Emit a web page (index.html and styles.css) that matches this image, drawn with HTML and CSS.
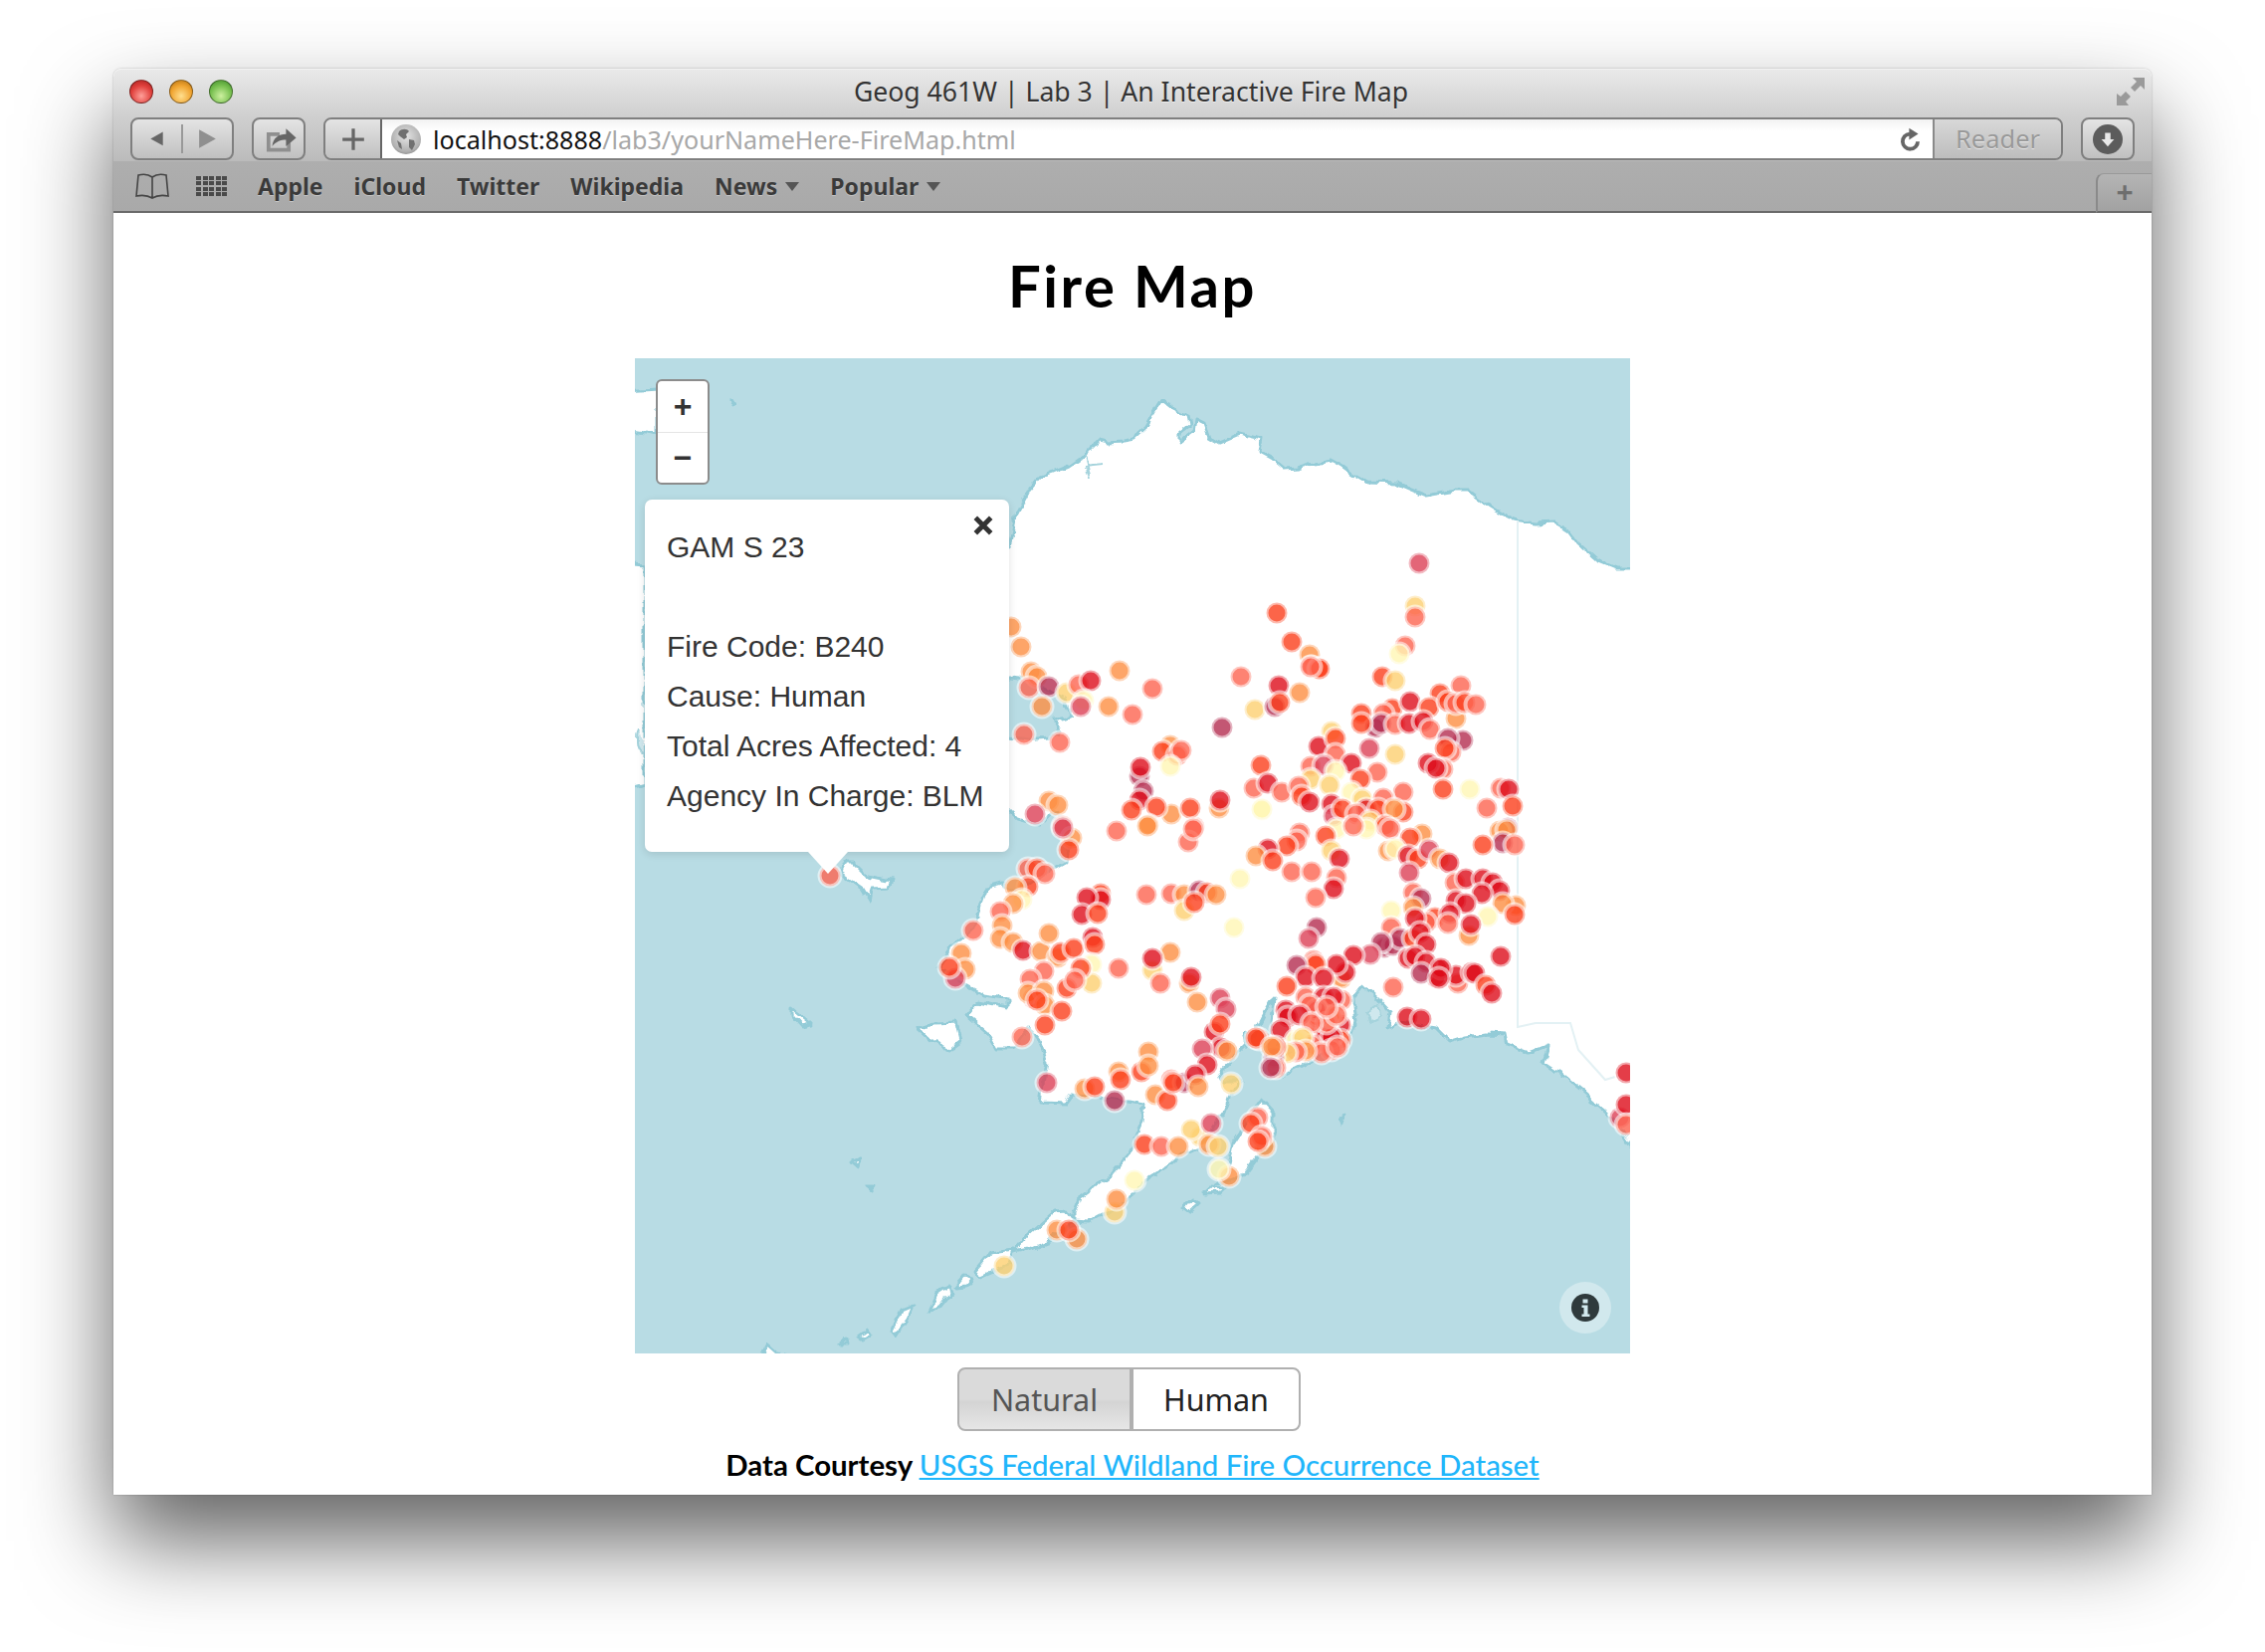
FILE: index.html
```html
<!DOCTYPE html>
<html lang="en">
<head>
  <meta charset="UTF-8" />
  <title>Geog 461W | Lab 3 | An Interactive Fire Map</title>
  <link rel="stylesheet" href="styles.css">
</head>
<body>

  <div class="window">

    <div class="titlebar">
      <div class="lights">
        <span class="light light-red"></span>
        <span class="light light-amber"></span>
        <span class="light light-green"></span>
      </div>
      <div class="window-title">Geog 461W | Lab 3 | An Interactive Fire Map</div>
      <svg class="fullscreen" viewBox="0 0 28 28">
        <path d="M16 0h12v12l-4-4-6 6-4-4 6-6z" />
        <path d="M0 16l4 3 5-5 5 5-5 5 3 4H0z" />
      </svg>
    </div>

    <div class="toolbar">
      <div class="tool tool-nav">
        <svg class="nav-half" viewBox="0 0 52 42"><path class="glyph" d="M35 11v20L17 21z" /></svg>
        <svg class="nav-half" viewBox="0 0 52 42"><path class="glyph-off" d="M17 11v20l18-10z" /></svg>
      </div>
      <div class="tool tool-share">
        <svg viewBox="0 0 54 42">
          <path class="glyph-off" d="M14 14h14v4H18v13h18v-6h4v10H14z" />
          <path class="glyph" d="M20 29c1-9 7-13 15-13V10l11 10-11 9v-7c-6 0-11 2-15 7z" />
        </svg>
      </div>
      <div class="address">
        <div class="tool-plus">
          <svg viewBox="0 0 24 24"><path class="glyph" d="M10.500 2h3v8.500H22v3h-8.500V22h-3v-8.500H2v-3h8.500z" /></svg>
        </div>
        <div class="url-field">
          <span class="globe">
            <svg viewBox="0 0 30 30">
              <path class="globe-land" d="M8 7c3-3 8-3 10 0l-3 3 1 3-3 2-4-3-2-2zM18 15l5 1 1 4-3 6-3-3zM6 16l4 3 1 6-3-2z" />
            </svg>
          </span>
          <span class="url"><b>localhost:8888</b>/lab3/yourNameHere-FireMap.html</span>
          <svg class="reload" viewBox="0 0 24 24">
            <path class="reload-arc" d="M18.500 14A7 7 0 1 1 11 7" />
            <path d="M10.500 1.500L19 7l-8.500 5.500z" />
          </svg>
        </div>
        <div class="reader">Reader</div>
      </div>
      <div class="tool tool-download">
        <span class="download-disc">
          <svg viewBox="0 0 24 24"><path d="M9 5h6v7h4l-7 8-7-8h4z" /></svg>
        </span>
      </div>
    </div>

    <div class="bookmarks">
      <svg class="book" viewBox="0 0 34 26">
        <path d="M17 4C13 1 7 1 3 2L1 23c5-1 11-1 16 2 5-3 11-3 16-2L31 2c-4-1-10-1-14 2zM17 4v21" />
      </svg>
      <div class="top-sites">
        <i></i><i></i><i></i><i></i><i></i>
        <i></i><i></i><i></i><i></i><i></i>
        <i></i><i></i><i></i><i></i><i></i>
        <i></i><i></i><i></i><i></i><i></i>
      </div>
      <span class="bookmark">Apple</span>
      <span class="bookmark">iCloud</span>
      <span class="bookmark">Twitter</span>
      <span class="bookmark">Wikipedia</span>
      <span class="bookmark bookmark-menu">News</span>
      <span class="bookmark bookmark-menu">Popular</span>
      <div class="new-tab">+</div>
    </div>

    <div class="page">
      <h1>Fire Map</h1>

      <div class="map">
        <svg id="mapCanvas" class="map-canvas" viewBox="0 0 1000 1000">
          <defs>
            <filter id="coast" x="-2%" y="-2%" width="104%" height="104%">
              <feTurbulence type="fractalNoise" baseFrequency="0.07" numOctaves="3" seed="7" result="noise" />
              <feDisplacementMap in="SourceGraphic" in2="noise" scale="9" xChannelSelector="R" yChannelSelector="G" />
              <feGaussianBlur stdDeviation="0.7" />
            </filter>
          </defs>
          <g class="land" filter="url(#coast)">
            <path d="M-10 33L22 31V77L-10 72Z" />
            <path d="M-10 205L10 207V427L-10 432Z" />
            <path d="M340 190L376 190L383 158L396 133L408 119L419 115L436 108L452 97L467 82L476 84L490 83L501 81L514 69L522 55L530 42L539 49L556 58L558 67L547 76L547 85L562 74L564 61L572 65L577 79L587 85L608 76L629 81L627 94L640 101L652 111L665 110L678 106L699 102L710 108L720 115L737 125L766 126L780 132L795 138L825 133L838 133L859 149L872 157L884 163L905 166L926 165L937 172L947 185L968 204L985 211L1010 211L1010 805L988 772L976 757L953 737L930 718L913 707L918 690L898 698L877 690L875 680L855 679L835 682L819 687L805 673L769 667L757 673L759 657L745 642L732 630L722 642L725 667L716 693L689 700L672 710L652 720L635 720L634 702L635 690L640 670L642 643L632 660L622 680L612 677L615 690L602 703L589 717L592 727L611 727L598 740L592 757L570 790L550 800L539 810L512 827L500 840L480 855L456 868L441 867L441 858L447 843L479 820L496 800L510 767L512 750L496 747L465 743L438 740L432 748L407 747L414 707L405 683L396 673L380 693L363 693L354 677L334 660L345 647L374 653L374 643L349 640L331 630L325 622L305 612L320 590L340 573L349 547L354 532L369 528L385 537L403 523L432 507L438 483L434 465L421 454L407 469L385 463L376 454L340 454L340 380L376 380L394 383L416 381L427 374L421 363L432 361L438 358L432 342L412 333L394 324L376 322L340 322Z" />
            <path d="M380 898L396 880L421 858L434 857L441 867L416 887L396 895Z" />
            <path d="M342 917L358 898L380 895L376 910L349 922Z" />
            <path d="M322 933L330 923L340 925L334 932Z" />
            <path d="M585 830L595 815L600 790L620 760L630 745L642 758L642 790L625 803L612 820L598 825Z" />
            <path d="M572 840L580 833L595 834L590 839Z" />
            <path d="M284 673L300 668L322 667L327 687L316 695L300 687Z" />
            <path d="M206 517L211 507L220 507L233 520L258 525L255 532L238 533L235 543L229 533Z" />
            <path d="M157 653L177 670L168 672L157 660Z" />
            <path d="M296 957L304 940L316 932L318 940L306 955Z" />
            <path d="M258 977L268 957L280 952L274 966L262 982Z" />
            <path d="M224 983L232 977L235 982L228 986Z" />
            <path d="M207 990L213 985L214 990Z" />
            <path d="M126 1005L133 992L142 1000L175 1005Z" />
            <path d="M218 808L226 805L224 813Z" />
            <path d="M232 832L240 832L237 836Z" />
            <path d="M96 43L101 45L99 47Z" />
            <path d="M552 855L560 845L565 850L556 858Z" />
            <path d="M709 762L713 760L711 768Z" />
          </g>
          <g class="inland-water" filter="url(#coast)">
            <path d="M452 97L458 122M451 108L470 106" />
            <path d="M645 690L660 680L672 684L655 700Z" />
            <path d="M690 680L702 668L712 676L700 690Z" />
            <path d="M735 656L748 650L750 662L738 668Z" />
            <path d="M4 373C0 385 2 395 9 398" />
          </g>
          <path class="border" d="M887 163V672L905 668L940 668L948 695L975 725L985 722" />
          <g id="fires"></g>
        </svg>

        <div class="zoom">
          <div class="zoom-btn">+</div>
          <div class="zoom-btn">&minus;</div>
        </div>

        <div class="popup">
          <svg class="popup-close" viewBox="0 0 20 20"><path d="M3 3L17 17M17 3L3 17" /></svg>
          <div>GAM S 23</div>
          <br>
          <div>Fire Code: B240</div>
          <div>Cause: Human</div>
          <div>Total Acres Affected: 4</div>
          <div>Agency In Charge: BLM</div>
        </div>

        <div class="info">
          <span class="info-dot">
            <svg viewBox="0 0 28 28"><path d="M11.500 5.500h5v4h-5zM10.500 11.500h6v9h2v2.500h-8v-2.500h2v-6.500h-2z" /></svg>
          </span>
        </div>
      </div>

      <div class="toggle">
        <button class="toggle-off">Natural</button>
        <button class="toggle-on">Human</button>
      </div>

      <p class="credit">Data Courtesy <a href="#">USGS Federal Wildland Fire Occurrence Dataset</a></p>
    </div>

  </div>

  <script src="fires.js"></script>

</body>
</html>
```

FILE: styles.css
```css
html, body {
  margin: 0;
  padding: 0;
  height: 100%;
  background: #fff;
  overflow: hidden;
}

body {
  padding: 69px 0 0 114px;
  box-sizing: border-box;
}

.window {
  width: 2048px;
  height: 1433px;
  display: flex;
  flex-direction: column;
  border-radius: 8px 8px 0 0;
  background: #fff;
  box-shadow: 0 46px 90px rgba(0, 0, 0, 0.62), 0 0 2px rgba(0, 0, 0, 0.3);
  font-family: "Noto Sans", sans-serif;
}

/* browser chrome */

.titlebar {
  height: 49px;
  flex: none;
  display: flex;
  align-items: center;
  padding-bottom: 4px;
  position: relative;
  border-radius: 8px 8px 0 0;
  border-top: 1px solid #f2f2f2;
  box-sizing: border-box;
  background: linear-gradient(#e9e9e9, #cfcfcf);
}

.lights {
  display: flex;
  gap: 16px;
  padding-left: 16px;
}

.light {
  width: 24px;
  height: 24px;
  border-radius: 50%;
  box-sizing: border-box;
  border: 1px solid rgba(0, 0, 0, 0.4);
}

.light-red { background: radial-gradient(circle at 50% 70%, #ffa09a, #e0403c 55%, #a51e1c); }
.light-amber { background: radial-gradient(circle at 50% 70%, #ffdf8f, #f0a430 55%, #b06e10); }
.light-green { background: radial-gradient(circle at 50% 70%, #cdf0a0, #78c050 55%, #3e8a28); }

.window-title {
  flex: 1;
  text-align: center;
  font-size: 26.600px;
  color: #333;
  margin-right: 88px;
  text-shadow: 0 1px 0 rgba(255, 255, 255, 0.6);
}

.fullscreen {
  width: 28px;
  height: 28px;
  margin-right: 7px;
  fill: #9a9a9a;
}

.toolbar {
  height: 44px;
  flex: none;
  display: flex;
  align-items: stretch;
  gap: 18px;
  padding-left: 17px;
  box-sizing: border-box;
  background: linear-gradient(#cfcfcf, #bbb);
}

.tool {
  display: flex;
  align-items: center;
  justify-content: center;
  box-sizing: border-box;
  height: 43px;
  border: 2px solid #7f7f7f;
  border-radius: 8px;
  background: linear-gradient(#e4e4e4, #c0c0c0);
}

.tool svg {
  display: block;
}

.tool-nav {
  width: 104px;
}

.nav-half {
  width: 50%;
  height: 100%;
}

.nav-half:first-child {
  border-right: 2px solid #999;
  height: 74%;
}

.tool-share {
  width: 54px;
}

.tool-share svg {
  width: 50px;
  height: 39px;
}

.glyph { fill: #666; }
.glyph-off { fill: #8f8f8f; }

.address {
  width: 1748px;
  height: 43px;
  display: flex;
  box-sizing: border-box;
  border: 2px solid #7f7f7f;
  border-radius: 8px;
  overflow: hidden;
}

.tool-plus {
  width: 57px;
  flex: none;
  display: flex;
  align-items: center;
  justify-content: center;
  border-right: 2px solid #666;
  box-sizing: border-box;
  background: linear-gradient(#e4e4e4, #c0c0c0);
}

.tool-plus svg {
  width: 26px;
  height: 26px;
}

.url-field {
  flex: 1;
  display: flex;
  align-items: center;
  background: linear-gradient(#f2f2f2, #fff 30%);
}

.globe {
  width: 30px;
  height: 30px;
  margin-left: 9px;
  border-radius: 50%;
  flex: none;
  background: radial-gradient(circle at 50% 40%, #e4e4e4, #b0b0b0 65%, #666);
}

.globe svg {
  display: block;
}

.globe-land {
  fill: #707070;
}

.url {
  font-family: "Noto Sans", sans-serif;
  font-size: 25.100px;
  color: #a8a8a8;
  margin-left: 12px;
  flex: 1;
  white-space: nowrap;
}

.url b {
  font-weight: normal;
  color: #111;
}

.reload {
  width: 26px;
  height: 26px;
  margin-right: 9px;
  fill: #666;
}

.reload-arc {
  fill: none;
  stroke: #666;
  stroke-width: 3.500;
}

.reader {
  width: 129px;
  flex: none;
  box-sizing: border-box;
  border-left: 2px solid #8a8a8a;
  text-align: center;
  font-size: 25.500px;
  line-height: 38px;
  color: #999;
  background: linear-gradient(#d8d8d8, #bdbdbd);
  text-shadow: 0 1px 0 rgba(255, 255, 255, 0.6);
}

.tool-download {
  width: 54px;
}

.download-disc {
  width: 30px;
  height: 30px;
  border-radius: 50%;
  background: #5c5c5c;
  display: flex;
  align-items: center;
  justify-content: center;
}

.download-disc svg {
  width: 22px;
  height: 22px;
  fill: #e8e8e8;
}

.bookmarks {
  height: 52px;
  flex: none;
  display: flex;
  align-items: center;
  gap: 31px;
  padding: 0 0 0 22px;
  position: relative;
  box-sizing: border-box;
  border-bottom: 2px solid #6a6a6a;
  background: linear-gradient(#aeaeae, #a9a9a9);
}

.book {
  width: 34px;
  height: 26px;
  margin-right: -4px;
  fill: none;
  stroke: #444;
  stroke-width: 1.600;
}

.top-sites {
  width: 32px;
  display: grid;
  grid-template-columns: repeat(5, 5px);
  grid-auto-rows: 4px;
  gap: 1.500px 1.500px;
  margin-right: -1px;
}

.top-sites i {
  background: #4a4a4a;
}

.bookmark {
  font-size: 23px;
  font-weight: 700;
  color: #3a3a3a;
  text-shadow: 0 1px 0 rgba(255, 255, 255, 0.35);
}

.bookmark-menu {
  display: flex;
  align-items: center;
  gap: 8px;
}

.bookmark-menu:first-of-type {
  margin-left: 4px;
}

.bookmark-menu::after {
  content: "";
  border-left: 7px solid transparent;
  border-right: 7px solid transparent;
  border-top: 9px solid #555;
}

.new-tab {
  position: absolute;
  right: 0;
  bottom: -2px;
  width: 56px;
  height: 40px;
  box-sizing: border-box;
  border-top: 1px solid #999;
  border-left: 2px solid #8a8a8a;
  border-bottom: 2px solid #6a6a6a;
  border-radius: 8px 0 0 0;
  background: linear-gradient(#b4b4b4, #a2a2a2);
  color: #6e6e6e;
  text-align: center;
  font-size: 30px;
  font-weight: 700;
  line-height: 36px;
}

/* page */

.page {
  flex: 1;
  display: flex;
  flex-direction: column;
  align-items: center;
}

h1 {
  margin: 0;
  height: 146px;
  line-height: 146px;
  font-family: Lato, sans-serif;
  font-size: 58px;
  font-weight: 700;
  letter-spacing: 2.500px;
  color: #000;
}

.map {
  width: 1000px;
  height: 1000px;
  flex: none;
  position: relative;
  overflow: hidden;
  background: #b8dce4;
}

.map-canvas {
  display: block;
  width: 1000px;
  height: 1000px;
}

.land path {
  fill: #fff;
  stroke: #93cbd7;
  stroke-width: 3;
  stroke-linejoin: round;
}

.inland-water path {
  fill: #cfe8ee;
  stroke: #a5d3dc;
  stroke-width: 2;
}

.border {
  fill: none;
  stroke: #e3f1f4;
  stroke-width: 2;
}

.fire {
  fill-opacity: 0.8;
  stroke: #fff;
  stroke-width: 4;
  stroke-opacity: 0.55;
}

.f-y { fill: #fff6b4; }
.f-g { fill: #fdcf70; }
.f-o { fill: #fd8e42; }
.f-s { fill: #fc6450; }
.f-r { fill: #fb3f1c; }
.f-c { fill: #dd0d1a; }
.f-p { fill: #dc4056; }
.f-m { fill: #b42d50; }

.zoom {
  position: absolute;
  left: 21px;
  top: 21px;
  width: 54px;
  height: 106px;
  box-sizing: border-box;
  border: 2px solid #8c8c8c;
  border-radius: 6px;
  background: #fff;
}

.zoom-btn {
  height: 51px;
  text-align: center;
  font-family: "Liberation Sans", sans-serif;
  font-size: 32px;
  font-weight: 700;
  line-height: 50px;
  color: #333;
}

.zoom-btn:first-child {
  border-bottom: 1px solid #e4e4e4;
}

.popup {
  position: absolute;
  left: 10px;
  top: 142px;
  width: 366px;
  height: 354px;
  box-sizing: border-box;
  padding: 23px 0 0 22px;
  border-radius: 7px;
  background: #fff;
  box-shadow: 0 2px 8px rgba(0, 0, 0, 0.12);
  font-family: "Liberation Sans", sans-serif;
  font-size: 30px;
  line-height: 50px;
  color: #333;
  white-space: nowrap;
}

.popup::after {
  content: "";
  position: absolute;
  left: 164px;
  top: 354px;
  border-left: 20px solid transparent;
  border-right: 20px solid transparent;
  border-top: 22px solid #fff;
}

.popup-close {
  position: absolute;
  right: 15px;
  top: 15px;
  width: 22px;
  height: 22px;
  fill: none;
  stroke: #333;
  stroke-width: 4.500;
}

.info {
  position: absolute;
  right: 19px;
  bottom: 20px;
  width: 52px;
  height: 52px;
  display: flex;
  align-items: center;
  justify-content: center;
  border-radius: 50%;
  background: rgba(255, 255, 255, 0.35);
}

.info-dot {
  width: 28px;
  height: 28px;
  border-radius: 50%;
  background: #2f3a3c;
}

.info-dot svg {
  display: block;
  fill: #d2e9ee;
}

.toggle {
  display: flex;
  margin: 14px 7px 0 0;
  height: 64px;
}

.toggle button {
  font-family: "Noto Sans", sans-serif;
  font-size: 30.500px;
  margin: 0;
  padding: 0;
  box-sizing: border-box;
  border: 2px solid #b0b0b0;
}

.toggle-off {
  width: 175px;
  color: #555;
  border-right: none;
  border-radius: 8px 0 0 8px;
  border-color: #d0d0d0;
  background: linear-gradient(#dadada 50%, #d4d4d4 55%, #e6e6e6);
}

.toggle-on {
  width: 170px;
  color: #222;
  border-radius: 0 8px 8px 0;
  background: #fff;
}

.credit {
  margin: 13px 0 0;
  font-family: Lato, sans-serif;
  font-size: 29.400px;
  font-weight: 700;
  line-height: 42px;
  color: #000;
}

.credit a {
  color: #1fb6fb;
  font-weight: 500;
}
```

FILE: fires.js
```js
// [x, y] are map pixels, the letter picks the colour class
const fires = `
o 378 270,o 388 290,r 645 256,r 660 285,o 678 298,s 680 310,r 687 312,p 788 206,g 784 249,s 784 260,s 774 289,y 768 297
o 398 315,o 404 320,s 396 331,m 416 330,g 434 336,s 446 328,c 458 324,y 451 344,p 448 350,o 409 350,o 476 350,s 500 358,o 487 314,s 520 332
s 609 320,c 647 329,o 668 336,g 623 353,m 643 350,r 648 346,m 590 371,s 391 378,s 427 386
o 538 389,r 530 395,r 545 399,s 549 394,y 538 410,m 507 420,c 508 411,m 511 435,c 507 444,o 539 458,r 524 451,r 499 454,o 516 469,s 562 471,r 558 452,s 556 486
o 587 452,c 588 444,y 630 454,o 416 445,o 425 449,p 402 458,s 430 470,o 439 482,r 436 494,p 430 472,s 484 475,o 515 470,s 561 473
r 688 312,s 679 310,r 751 320,g 764 324,s 830 329,r 809 337,o 825 362,r 761 352,s 752 357,c 779 345,r 798 351,r 817 345,s 825 347,r 834 346,s 845 348
r 730 357,m 744 371,m 750 367,s 764 368,c 778 367,r 730 367,c 792 365,s 799 373
m 832 384,m 817 382,s 820 396,r 814 392,g 700 375,c 687 390,r 704 382,p 738 392,g 764 398,s 704 398,s 812 413,c 797 407,c 805 412
r 629 409,s 622 432,s 679 410,p 692 409,c 720 407,s 746 416,r 729 423,g 679 423,y 704 415,c 636 427,s 650 436,s 667 430,r 670 440,c 678 446,g 698 429
s 772 436,r 812 433,y 839 433,s 870 432,c 878 433,s 856 452,r 882 450,y 630 453,y 720 436,g 731 443,s 752 442
c 700 448,p 702 460,r 711 453,c 735 453,r 747 453,r 772 456,s 725 458,o 763 453,g 739 465,r 754 470,y 735 473,y 705 473,r 694 480,s 722 470,s 759 473
o 791 478,r 779 482,s 668 477,s 665 485,r 655 490,c 636 493,o 624 500,r 641 505,g 700 495,c 708 503,o 757 495,y 764 493,c 777 500,r 787 503,p 798 494,o 809 503,c 818 507,p 778 517
m 877 472,o 869 475,o 876 474,m 872 487,r 852 489,s 884 489,s 660 516,s 680 516,s 705 522,c 702 533,s 684 542
s 824 527,c 835 523,c 852 523,c 862 527,c 869 535,c 851 538,c 825 545,c 835 548,s 782 537,m 790 543,o 782 552,y 760 555,r 804 562,s 795 567,c 784 563,c 819 558,s 817 568
o 885 550,o 872 548,y 857 561,r 884 559,o 838 580,c 840 569,s 760 572,m 685 572,p 677 583
c 870 601,c 807 613,c 805 622,s 827 628,c 825 620,c 841 617,c 844 618,r 855 630,c 861 638,s 762 632,c 776 662,c 790 664
m 753 592,m 762 590,m 769 583,m 750 587,r 782 583,c 789 577,c 795 589,c 777 603,c 784 601,c 795 607,m 790 618,c 810 613,c 808 623
p 739 599,c 722 600,o 710 623,c 714 617,c 705 609,s 682 605,r 684 609,m 665 610,c 674 622,c 692 623,r 655 631
s 674 642,s 710 645,c 692 642,c 702 642,c 654 655,c 656 662,c 649 675,c 709 670,s 689 673,s 697 677,r 709 685,s 697 687,s 689 685,c 693 680,c 700 682,o 699 662,r 686 662
c 685 655,s 695 668,s 678 650,s 705 660,s 680 690,s 700 695,s 690 698,s 706 692,c 668 660,s 680 668,s 695 652
y 664 685,r 627 684,g 671 683,o 674 696,s 664 697,g 655 698,m 642 703,s 644 713,r 644 692
p 990 763,c 996 718,c 996 750,s 996 770
s 395 513,r 404 513,s 412 518,r 395 531,o 382 532,y 389 544,o 380 548,s 367 556,o 369 570,o 367 583,o 380 587,c 390 595,o 408 596,o 416 578,o 425 602,r 428 597,r 441 593
c 460 582,r 462 589,y 459 609,g 459 628,r 448 613,s 411 616,s 397 624,s 400 643,o 395 638,o 411 636,o 412 650,r 404 645,r 434 633,s 442 625,r 429 656,r 412 670,s 389 682
r 468 538,c 468 544,c 454 542,c 449 559,r 465 558,s 514 539,s 539 538,o 552 539,g 552 555,m 567 535,r 575 537,r 562 547,o 584 539,y 608 523,y 602 572
o 538 597,g 520 615,c 520 603,s 528 628,s 486 613,o 557 628,c 559 622,o 565 647,p 588 643,p 594 654,c 582 677,r 588 669,c 589 693,o 595 696,p 570 694,c 575 710
r 624 683,o 640 692,m 639 713,o 516 697,r 509 717,o 516 711,o 486 717,r 488 725,p 414 728,o 452 734,r 462 732,m 482 746
o 523 740,r 535 746,s 539 725,m 552 728,r 541 728,c 563 720,o 566 732,g 599 729
g 568 782,g 559 775,p 579 769,r 512 790,s 529 792,o 546 792,o 577 790,g 586 792,o 597 822,y 587 815
s 626 763,r 619 769,o 633 792,s 630 782,r 626 787,y 502 826,g 482 858,o 484 845,o 424 876,o 444 885,r 436 876,g 371 912
o 328 598,o 332 614,p 322 623,r 316 612,s 340 575,s 196 520
`;

const svgNS = 'http://www.w3.org/2000/svg';
const layer = document.getElementById('fires');

fires.trim().split(/[,\n]/).forEach(function (item) {
  const parts = item.split(' ');
  const dot = document.createElementNS(svgNS, 'circle');
  dot.setAttribute('class', 'fire f-' + parts[0]);
  dot.setAttribute('cx', parts[1]);
  dot.setAttribute('cy', parts[2]);
  dot.setAttribute('r', 10.5);
  layer.appendChild(dot);
});
```
